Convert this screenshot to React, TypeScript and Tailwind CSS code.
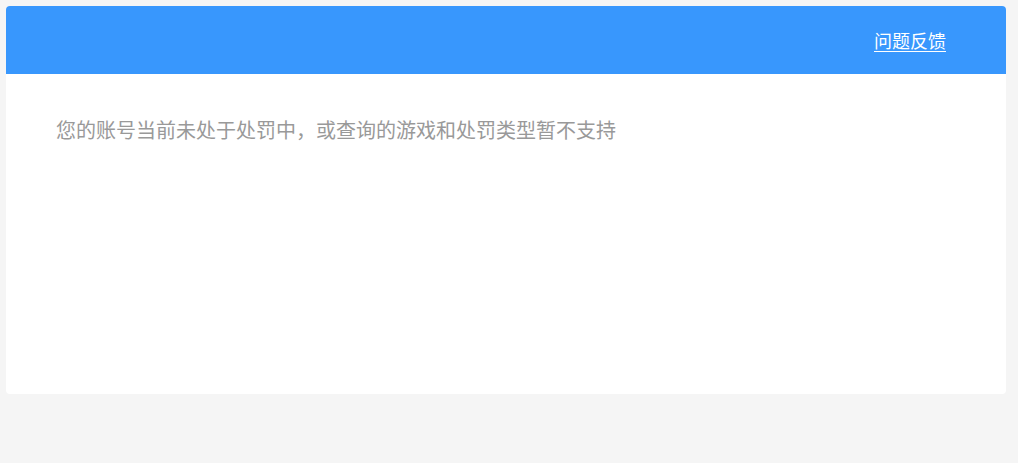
export default function App() {
  return (
    <div
      className="min-h-[463px] bg-[#f5f5f5] p-[6px]"
      style={{ fontFamily: '"Noto Sans CJK SC", "Microsoft YaHei", sans-serif' }}
    >
      <div className="h-[388px] w-[1000px] overflow-hidden rounded-[4px] bg-white">
        <header className="flex h-[68px] items-center justify-end bg-[#3897fd] pr-[60px]">
          <a href="#" className="text-[18px] leading-none text-white underline underline-offset-[3px]">
            问题反馈
          </a>
        </header>
        <div className="px-[50px] pt-[44px]">
          <p className="text-[20px] leading-[24px] text-[#999999]">
            您的账号当前未处于处罚中，或查询的游戏和处罚类型暂不支持
          </p>
        </div>
      </div>
    </div>
  );
}
